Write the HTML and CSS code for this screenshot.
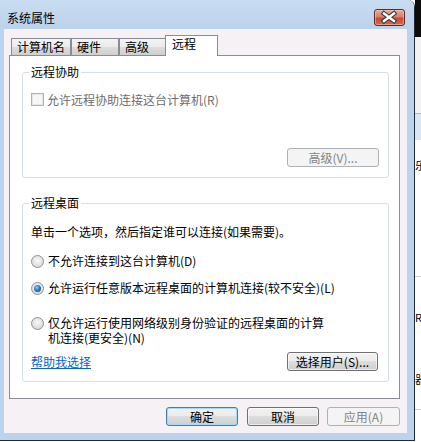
FILE: index.html
```html
<!DOCTYPE html>
<html lang="zh-CN">
<head>
<meta charset="utf-8">
<title>系统属性</title>
<link rel="stylesheet" href="styles.css">
</head>
<body>
<div class="screen">
  <div class="window">
    <div class="titlebar">
      <span class="title">系统属性</span>
      <div class="close">
        <svg width="29" height="15" viewBox="0 0 29 15">
          <path d="M9 3.5 L19 11 M19 3.5 L9 11" stroke="#3a3a3a" stroke-width="4.6" stroke-linecap="square" fill="none"/>
          <path d="M9 3.5 L19 11 M19 3.5 L9 11" stroke="#ffffff" stroke-width="2.4" stroke-linecap="square" fill="none"/>
        </svg>
      </div>
    </div>
    <div class="body">
      <div class="tabs">
        <div class="tab t1">计算机名</div>
        <div class="tab t2">硬件</div>
        <div class="tab t3">高级</div>
        <div class="tab active">远程</div>
      </div>
      <div class="panel">
        <div class="group g1">
          <span class="legend">远程协助</span>
          <div class="check-row">
            <span class="checkbox"></span>
            <span>允许远程协助连接这台计算机(R)</span>
          </div>
          <div class="btn-row">
            <div class="btn disabled w-adv">高级(V)...</div>
          </div>
        </div>
        <div class="group g2">
          <span class="legend">远程桌面</span>
          <div class="intro">单击一个选项，然后指定谁可以连接(如果需要)。</div>
          <div class="radio-row r1">
            <span class="radio"></span>
            <span>不允许连接到这台计算机(D)</span>
          </div>
          <div class="radio-row r2">
            <span class="radio checked"></span>
            <span>允许运行任意版本远程桌面的计算机连接(较不安全)(L)</span>
          </div>
          <div class="radio-row r3">
            <span class="radio"></span>
            <span class="two-lines">仅允许运行使用网络级别身份验证的远程桌面的计算<br>机连接(更安全)(N)</span>
          </div>
          <div class="actions">
            <span class="link">帮助我选择</span>
            <div class="btn w-users">选择用户(S)...</div>
          </div>
        </div>
      </div>
      <div class="dlg-buttons">
        <div class="btn default w-ok">确定</div>
        <div class="btn w-cancel">取消</div>
        <div class="btn disabled w-apply">应用(A)</div>
      </div>
    </div>
  </div>
  <div class="desktop">
    <div class="d-black"></div>
    <div class="d-grey"></div>
    <div class="d-line"></div>
    <div class="d-blue"></div>
    <div class="d-gap1"></div>
    <div class="d-glyph">乐</div>
    <div class="d-gap2"></div>
    <div class="d-rule"></div>
    <div class="d-gap3"></div>
    <div class="d-glyph">R</div>
    <div class="d-gap4"></div>
    <div class="d-glyph">器</div>
    <div class="d-gap5"></div>
    <div class="d-rule"></div>
  </div>
</div>
</body>
</html>
```

FILE: styles.css
```css
* { box-sizing: border-box; }
html, body { margin: 0; padding: 0; }
body {
  font-family: "Noto Sans CJK SC", "Noto Sans", sans-serif;
  font-size: 12px;
  line-height: 14px;
  color: #000;
  background: #fff;
}
.screen {
  width: 421px;
  height: 442px;
  display: flex;
  align-items: flex-start;
  background: #fff;
  overflow: hidden;
}
.window {
  width: 415px;
  height: 441px;
  flex: none;
  display: flex;
  flex-direction: column;
  background: #bcd3ee;
  border-right: 1px solid #1f2b39;
  border-bottom: 1px solid #1f2b39;
  border-top-right-radius: 7px;
}
.titlebar {
  height: 29px;
  flex: none;
  display: flex;
  justify-content: space-between;
  align-items: flex-start;
  padding: 0 9px 0 7px;
  background: linear-gradient(#c9dcf1, #bbd2ec);
  border-top-right-radius: 6px;
}
.title {
  margin-top: 11px;
  line-height: 14px;
}
.close {
  margin-top: 9px;
  width: 31px;
  height: 17px;
  border: 1px solid #5e2a22;
  border-radius: 3px;
  background: linear-gradient(#e8ab9a, #d8806a 45%, #c64a31 55%, #d26e52);
  box-shadow: inset 0 0 0 1px rgba(255, 220, 210, 0.45);
  display: flex;
}
.body {
  flex: 1;
  margin: 0 7px 7px 4px;
  background: #f5f1f5;
  padding: 6px 7px 7px 5px;
  display: flex;
  flex-direction: column;
}
.tabs {
  height: 20px;
  flex: none;
  display: flex;
  align-items: flex-end;
  padding-left: 2px;
}
.tab {
  height: 17px;
  border: 1px solid #898c95;
  border-bottom: none;
  background: linear-gradient(#f3f3f3, #ebebeb 50%, #dddddd 50%, #cfcfcf);
  padding-left: 5px;
  line-height: 15px;
  white-space: nowrap;
}
.t1 { width: 60px; }
.t2 { width: 48px; }
.t3 { width: 47px; }
.tab.active {
  width: 53px;
  height: 21px;
  margin-left: -1px;
  margin-bottom: -1px;
  background: #fff;
  position: relative;
  z-index: 1;
  padding-left: 6px;
  line-height: 16px;
}
.panel {
  height: 344px;
  flex: none;
  background: #fff;
  border: 1px solid #898c95;
  padding: 0 10px 0 12px;
}
.group {
  position: relative;
  border: 1px solid #d5dfe5;
  border-radius: 3px;
}
.legend {
  position: absolute;
  top: -8px;
  left: 6px;
  padding: 0 2px;
  background: #fff;
  line-height: 14px;
  white-space: nowrap;
}
.g1 {
  margin-top: 16px;
  height: 106px;
  padding: 20px 9px 0 8px;
}
.check-row {
  height: 13px;
  display: flex;
  align-items: center;
  gap: 3px;
  color: #6d6d6d;
  white-space: nowrap;
}
.checkbox {
  width: 13px;
  height: 13px;
  flex: none;
  border: 1px solid #b1b1b1;
  background: #f6f6f6;
  box-shadow: inset 0 0 0 1px #e6e6e6;
}
.btn-row {
  margin-top: 42px;
  display: flex;
  justify-content: flex-end;
}
.btn {
  height: 19px;
  flex: none;
  display: flex;
  align-items: center;
  justify-content: center;
  border: 1px solid #707070;
  border-radius: 3px;
  background: linear-gradient(#f2f2f2, #ebebeb 50%, #dddddd 50%, #cfcfcf);
  box-shadow: inset 0 0 0 1px rgba(255, 255, 255, 0.6);
  white-space: nowrap;
}
.btn.disabled {
  border-color: #adb2b5;
  background: #f4f4f4;
  box-shadow: none;
  color: #838383;
}
.btn.default {
  border-color: #3c7fb1;
  box-shadow: inset 0 0 0 1px #9edcfa;
}
.w-adv { width: 92px; }
.w-users { width: 91px; }
.g2 {
  margin-top: 25px;
  height: 179px;
  padding: 21px 10px 0 8px;
}
.intro { white-space: nowrap; }
.radio-row {
  display: flex;
  align-items: flex-start;
  gap: 4px;
  white-space: nowrap;
}
.r1 { margin-top: 15px; }
.r2 { margin-top: 13px; }
.r3 { margin-top: 20px; }
.two-lines { line-height: 15px; }
.radio {
  width: 13px;
  height: 13px;
  margin-top: 1px;
  flex: none;
  border-radius: 50%;
  border: 1px solid #8f9296;
  background: radial-gradient(circle at 50% 40%, #f8f8f8 0%, #e2e2e2 55%, #c9c9c9 100%);
  position: relative;
}
.r3 .radio { margin-top: 2px; }
.radio.checked::after {
  content: "";
  position: absolute;
  left: 2px;
  top: 2px;
  width: 7px;
  height: 7px;
  border-radius: 50%;
  background: radial-gradient(circle at 40% 35%, #8fd0f5 0%, #2a7fc0 45%, #0d3f73 100%);
}
.actions {
  margin-top: 7px;
  height: 19px;
  display: flex;
  justify-content: space-between;
  align-items: center;
}
.link {
  color: #0066cc;
  text-decoration: underline;
  white-space: nowrap;
}
.dlg-buttons {
  margin-top: 8px;
  display: flex;
  justify-content: flex-end;
}
.w-ok { width: 72px; }
.w-cancel { width: 72px; margin-left: 9px; }
.w-apply { width: 73px; margin-left: 8px; }

.desktop {
  flex: 1;
  height: 442px;
  display: flex;
  flex-direction: column;
  overflow: hidden;
  background: #fff;
}
.d-black { height: 37px; background: #0c0c0c; flex: none; }
.d-grey { height: 76px; background: #f2f2f2; flex: none; }
.d-line { height: 1px; background: #aeb8c4; flex: none; }
.d-blue { height: 26px; background: #dbe6f3; flex: none; }
.d-gap1 { height: 18px; flex: none; }
.d-glyph { height: 14px; line-height: 14px; flex: none; white-space: nowrap; font-size: 11px; }
.d-gap2 { height: 104px; flex: none; }
.d-rule { height: 1px; background: #cfcfcf; flex: none; }
.d-gap3 { height: 33px; flex: none; }
.d-gap4 { height: 48px; flex: none; }
.d-gap5 { height: 23px; flex: none; }
```
